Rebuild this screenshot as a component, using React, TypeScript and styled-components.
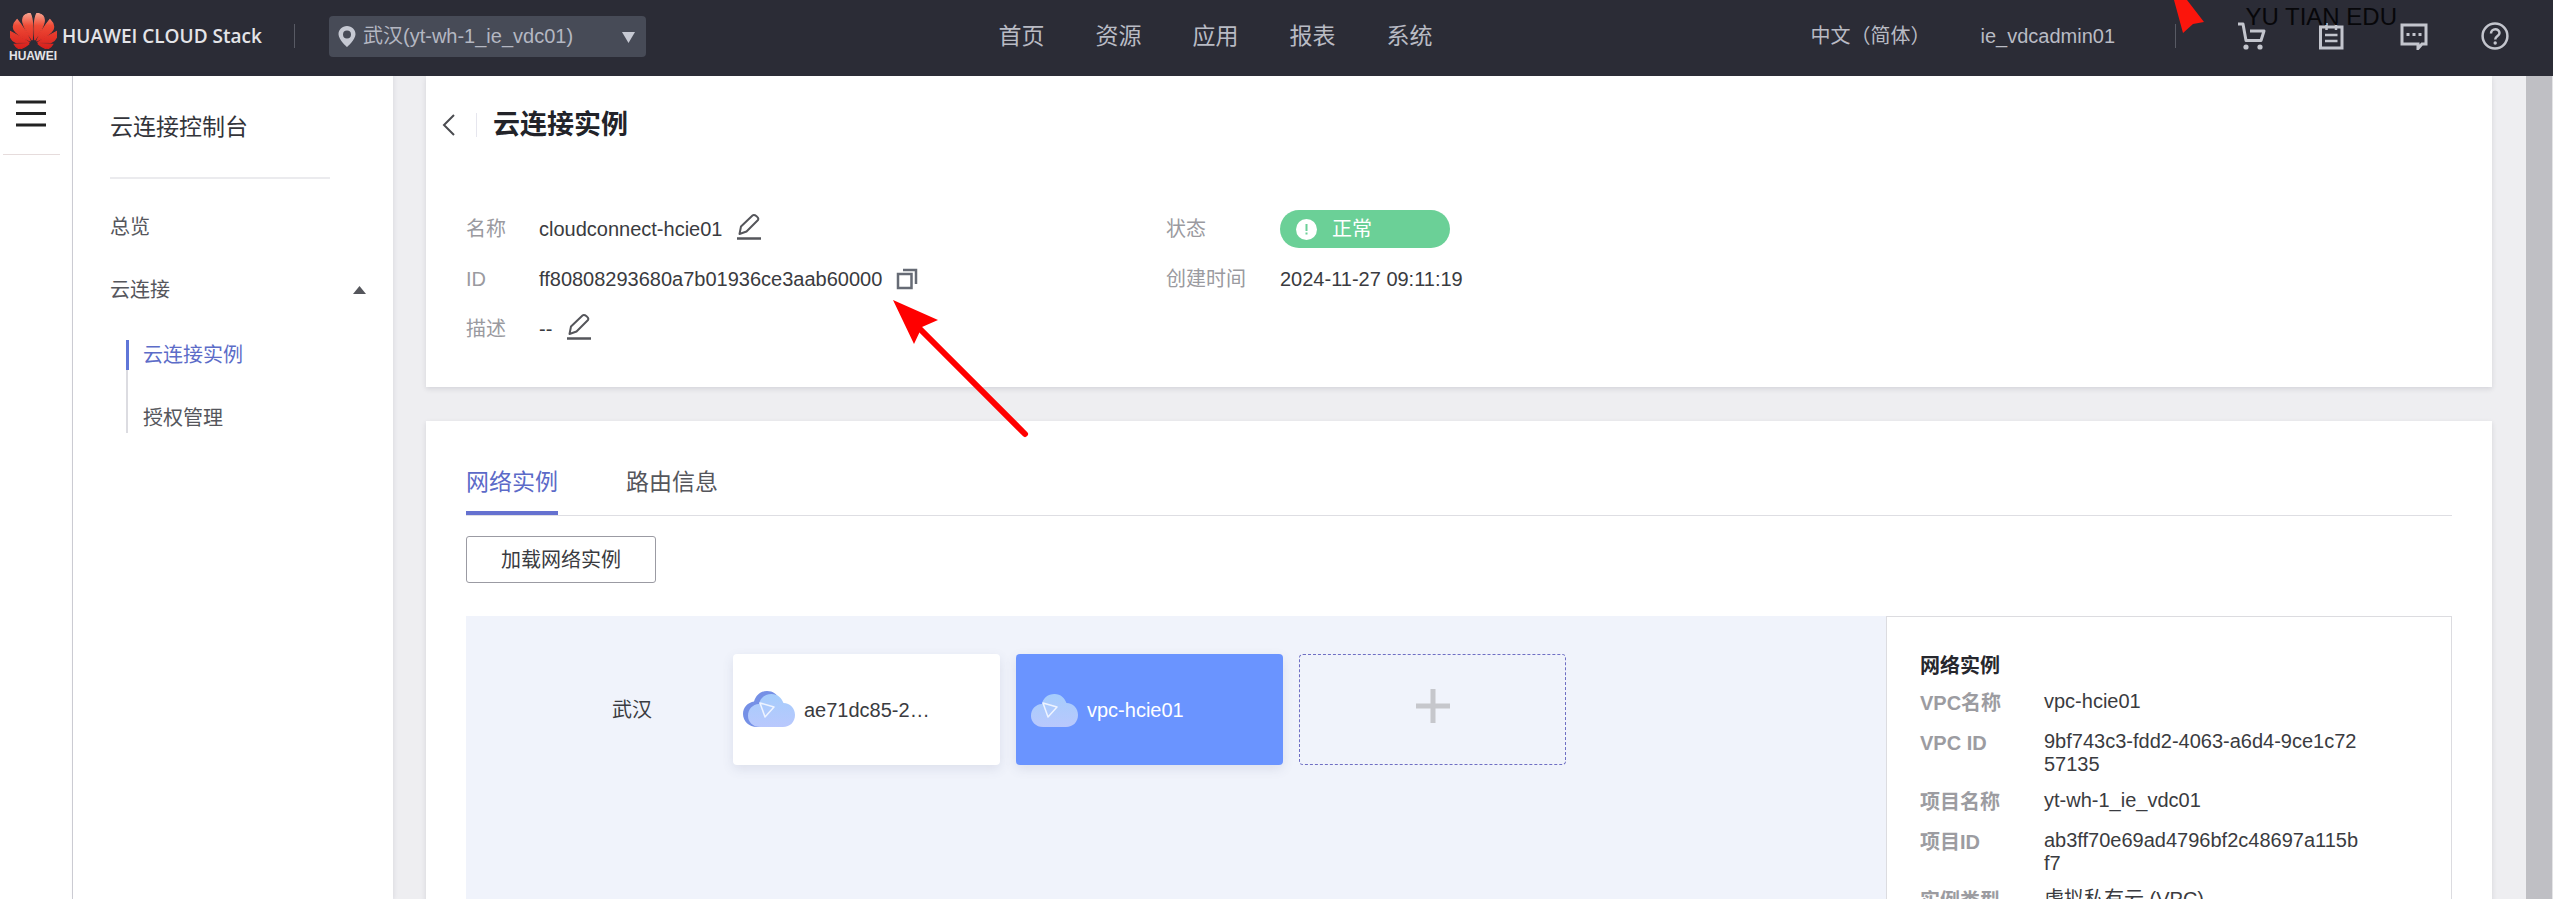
import React from 'react';
import styled, { createGlobalStyle } from 'styled-components';

const GlobalStyle = createGlobalStyle`
  *, *::before, *::after { box-sizing: border-box; }
  html, body { margin: 0; padding: 0; }
  body {
    font-family: "Liberation Sans", "Noto Sans CJK SC", sans-serif;
    font-size: 20px;
    line-height: 28px;
    color: #3a3b40;
    background: #eeeef1;
  }
  button, select { font: inherit; color: inherit; }
  button { padding: 0; border: 0; background: none; cursor: pointer; }
  a { color: inherit; text-decoration: none; }
  h1, h2, p, ul, dl, dd { margin: 0; padding: 0; }
  ul { list-style: none; }
  svg { display: block; flex: none; }
`;

const Shell = styled.div`
  position: relative;
  display: grid;
  grid-template-rows: auto minmax(0, 1fr);
  height: 100vh;
  overflow: hidden;
`;

/* ---------- top bar ---------- */

const TopBar = styled.header`
  display: flex;
  align-items: center;
  height: 76px;
  padding: 0 44px 4px 8px;
  background: #2b2c36;
  color: #b9bbc4;
`;

const TopLeft = styled.div`
  display: flex;
  align-items: center;
  flex: 0 0 calc(39% + 15px);
`;

const Brand = styled.a`
  display: flex;
  align-items: center;
  gap: 4px;
  width: 286px;
  color: #e4e4e8;
`;

const LogoMark = styled.span`
  display: flex;
  flex-direction: column;
  align-items: center;
  width: 50px;
  padding-top: 4px;
  font-size: 12px;
  line-height: 14px;
  font-weight: 700;
`;

const BrandName = styled.span`
  font-family: "Open Sans", "Noto Sans", sans-serif;
  font-size: 19px;
  font-weight: 600;
  white-space: nowrap;
`;

const BarDivider = styled.span`
  width: 1px;
  height: 24px;
  background: #585a64;
`;

const RegionField = styled.label`
  position: relative;
  display: flex;
  align-items: center;
  width: 317px;
  margin-left: 34px;
  color: #b4b7c2;
`;

const RegionSelect = styled.select`
  width: 100%;
  height: 41px;
  padding: 0 40px 0 34px;
  border: 0;
  border-radius: 4px;
  appearance: none;
  background: #474b57;
`;

const PinIcon = styled.svg`
  position: absolute;
  left: 9px;
  top: 10px;
  pointer-events: none;
`;

const CaretIcon = styled.svg`
  position: absolute;
  right: 11px;
  top: 16px;
  pointer-events: none;
`;

const MainNav = styled.nav`
  display: flex;
  gap: 51px;
  font-size: 23px;
  white-space: nowrap;
`;

const TopRight = styled.div`
  display: flex;
  align-items: center;
  margin-left: auto;
  white-space: nowrap;
`;

const UserLinks = styled.div`
  display: flex;
  gap: 50px;
  margin-right: 60px;
`;

const Tools = styled.div`
  display: flex;
  gap: 53px;
  margin-left: 62px;
`;

/* ---------- side areas ---------- */

const Body = styled.div`
  display: flex;
  min-height: 0;
`;

const Rail = styled.div`
  flex: 0 0 73px;
  padding: 0 12px 0 3px;
  border-right: 1px solid #cfcfd6;
  background: #fff;
`;

const MenuButton = styled.button`
  display: flex;
  width: 100%;
  height: 79px;
  padding: 24px 0 0 13px;
  border-bottom: 1px solid #e6dcdc;
`;

const SideNav = styled.nav`
  flex: 0 0 320px;
  padding: 21px 27px 0 37px;
  background: #fff;
  box-shadow: 1px 0 4px rgba(60, 60, 90, 0.1);
  color: #55565c;
`;

const SideTitle = styled.h2`
  width: 220px;
  height: 82px;
  margin-bottom: 16px;
  padding-top: 16px;
  border-bottom: 2px solid #ebebee;
  font-size: 23px;
  font-weight: 400;
  color: #33343a;
`;

const SideItem = styled.a`
  display: flex;
  align-items: center;
  justify-content: space-between;
  height: 63px;
`;

const SubList = styled.ul`
  display: grid;
  gap: 33px;
  margin: 19px 0 0 16px;
  border-left: 2px solid #dcdce1;
`;

const SubItem = styled.a<{ $active?: boolean }>`
  display: block;
  height: 30px;
  margin-left: -2px;
  padding-left: ${(p) => (p.$active ? 14 : 17)}px;
  border-left: ${(p) => (p.$active ? '3px solid #5f76d8' : '0')};
  line-height: 30px;
  color: ${(p) => (p.$active ? '#5c6cc8' : 'inherit')};
`;

const ScrollTrack = styled.div`
  flex: 0 0 27px;
  border-right: 1px solid #e4e4e6;
  background: #bfbfc4;
`;

/* ---------- main content ---------- */

const Main = styled.main`
  flex: 1;
  min-width: 0;
  padding: 0 34px 0 33px;
  overflow: hidden;
`;

const Card = styled.section`
  margin-bottom: 34px;
  padding: 0 40px;
  background: #fff;
  box-shadow: 0 2px 5px rgba(60, 60, 80, 0.14);
`;

const PageHead = styled.div`
  display: flex;
  align-items: center;
  height: 98px;
  margin-left: -24px;
`;

const BackButton = styled.button`
  padding-right: 20px;
  border-right: 1px solid #e6e6ee;
`;

const PageTitle = styled.h1`
  margin-left: 16px;
  font-size: 27px;
  font-weight: 700;
  color: #222329;
`;

const InfoGrid = styled.div`
  display: grid;
  grid-template-columns: minmax(0, 700px) minmax(0, 1fr);
  padding: 30px 0 33px;
`;

const InfoList = styled.dl<{ $label: number }>`
  display: grid;
  grid-template-columns: ${(p) => p.$label}px minmax(0, 1fr);
  grid-auto-rows: 50px;
  align-items: center;
  align-content: start;
  white-space: nowrap;

  dt { color: #9a9aa0; }
`;

const InfoValue = styled.dd`
  display: flex;
  align-items: center;
  gap: 14px;
`;

const Status = styled.span`
  display: flex;
  align-items: center;
  gap: 15px;
  width: 170px;
  height: 38px;
  padding-left: 16px;
  border-radius: 19px;
  background: #6bd097;
  color: #fff;
`;

const Tabs = styled.div`
  display: flex;
  gap: 68px;
  padding-top: 35px;
  border-bottom: 1px solid #dedee3;
  font-size: 23px;
`;

const Tab = styled.button<{ $active?: boolean }>`
  height: 59px;
  padding-bottom: 4px;
  border-bottom: 4px solid ${(p) => (p.$active ? '#6571d0' : 'transparent')};
  color: ${(p) => (p.$active ? '#5c6ac8' : '#55565c')};
`;

const LoadButton = styled.button`
  height: 47px;
  margin: 20px 0 33px;
  padding: 0 34px;
  border: 1px solid #9b9ba3;
  border-radius: 3px;
`;

const Topology = styled.div`
  display: flex;
`;

const RegionMap = styled.div`
  flex: 1;
  display: flex;
  align-items: flex-start;
  min-width: 0;
  min-height: 480px;
  padding-top: 38px;
  background: #f0f3fb;
`;

const RegionName = styled.span`
  width: 267px;
  padding-left: 146px;
  line-height: 112px;
`;

const Instances = styled.div`
  display: flex;
  gap: 16px;
`;

const Instance = styled.button<{ $selected?: boolean }>`
  display: flex;
  align-items: center;
  gap: 8px;
  width: 267px;
  height: 111px;
  padding-left: 10px;
  border-radius: 4px;
  background: ${(p) => (p.$selected ? '#6a94ff' : '#fff')};
  color: ${(p) => (p.$selected ? '#fff' : '#3a3b40')};
  box-shadow: 0 4px 12px rgba(70, 80, 120, 0.12);
`;

const AddInstance = styled.button`
  display: flex;
  align-items: center;
  justify-content: center;
  width: 267px;
  height: 111px;
  padding-bottom: 8px;
  border: 1px dashed #6f6fc4;
  border-radius: 4px;
`;

const Detail = styled.aside`
  flex: 0 0 566px;
  padding: 35px 33px;
  border: 1px solid #dcdce0;
  background: #fff;
`;

const DetailTitle = styled.h2`
  margin-bottom: 10px;
  font-size: 20px;
  font-weight: 700;
  color: #26272d;
`;

const DetailList = styled.dl`
  display: grid;
  grid-template-columns: 124px 316px;
  row-gap: 13px;

  dt { min-height: 27px; line-height: 27px; font-weight: 700; color: #9c9ca1; }
  dd { line-height: 23px; word-break: break-all; }
`;

const ArrowOverlay = styled.svg`
  position: absolute;
  left: 890px;
  top: 296px;
  pointer-events: none;
`;

const PointerOverlay = styled.svg`
  position: absolute;
  right: 348px;
  top: 0;
  pointer-events: none;
`;

const Watermark = styled.span`
  position: absolute;
  right: 156px;
  top: 3px;
  font-size: 24px;
  color: #07070a;
  white-space: nowrap;
  pointer-events: none;
`;

/* ---------- drawings ---------- */

const petals =
  'M3.67 6.14S1.82 7.91 1.72 9.78v.35c.08 1.51 1.22 2.4 1.22 2.4 1.83 1.79 6.26 4.04 7.3 4.55 0 0 .06.03.1-.01l.02-.04v-.04C7.52 10.8 3.67 6.14 3.67 6.14zM9.65 18.6c-.02-.08-.1-.08-.1-.08l-7.38.26c.8 1.43 2.15 2.53 3.56 2.2.96-.25 3.16-1.78 3.88-2.3.06-.05.04-.09.04-.09zm.08-.78C6.49 15.63.21 12.28.21 12.28c-.15.46-.2.9-.21 1.3v.07c0 1.07.4 1.82.4 1.82.8 1.69 2.34 2.2 2.34 2.2.7.3 1.4.31 1.4.31.12.02 4.4 0 5.54 0 .05 0 .08-.05.08-.05v-.06c0-.03-.03-.05-.03-.05zM9.06 3.19a3.42 3.42 0 00-2.57 3.15v.41c.03.6.16 1.05.16 1.05.66 2.9 3.86 7.65 4.55 8.65.05.05.1.03.1.03a.1.1 0 00.06-.1c1.06-10.6-1.11-13.42-1.11-13.42-.32.02-1.19.23-1.19.23z';

const Flower = () => (
  <svg width="47" height="36" viewBox="0 3 24 18" aria-hidden="true">
    <defs>
      <linearGradient id="petal" x1="0" y1="3" x2="0" y2="21" gradientUnits="userSpaceOnUse">
        <stop offset="0" stopColor="#f7a08c" />
        <stop offset="0.35" stopColor="#ee4a35" />
        <stop offset="1" stopColor="#d81f1c" />
      </linearGradient>
    </defs>
    <g fill="url(#petal)" stroke="url(#petal)" strokeWidth="0.600">
      <path d={petals} />
      <path d={petals} transform="matrix(-1 0 0 1 24 0)" />
    </g>
  </svg>
);

const toolStroke = { fill: 'none', stroke: '#c3c5cd', strokeWidth: 3 } as const;

const CartIcon = () => (
  <svg width="28" height="28" viewBox="0 0 28 28" {...toolStroke}>
    <path d="M0 2H5L8 18.500H23L26 9H12" strokeLinejoin="round" />
    <circle cx="8" cy="25" r="2.600" fill="#c3c5cd" stroke="none" />
    <circle cx="22" cy="25" r="2.600" fill="#c3c5cd" stroke="none" />
  </svg>
);

const ClipboardIcon = () => (
  <svg width="28" height="28" viewBox="0 0 28 28" {...toolStroke}>
    <path d="M1.500 5H23V26H1.500Z" />
    <path d="M7.500 1V8M17 1V8M6 13H18.500M6 19H18.500" strokeWidth="2.500" />
  </svg>
);

const ChatIcon = () => (
  <svg width="28" height="28" viewBox="0 0 28 28" {...toolStroke}>
    <path d="M2 3H26V22H22L18 26.500V22H2Z" />
    <path d="M6.500 12.500H9.500M12.500 12.500H15.500M18.500 12.500H21.500" />
  </svg>
);

const HelpIcon = () => (
  <svg width="28" height="28" viewBox="0 0 28 28" {...toolStroke} strokeWidth={2.5}>
    <circle cx="14" cy="14" r="12.400" />
    <path d="M10 11.500C10 6 18.500 6 18.500 11C18.500 14 14.200 14 14.200 17.500" />
    <circle cx="14.200" cy="21" r="1.700" fill="#c3c5cd" stroke="none" />
  </svg>
);

const PencilIcon = () => (
  <svg width="26" height="32" viewBox="0 0 26 32" fill="none" stroke="#55565b" strokeWidth="2">
    <path d="M1 25.500H25" strokeWidth="2.500" />
    <path d="M3.500 21L5 13.500L16.500 2.500C18.500 0.800 23.500 4.500 22 7L10.500 18.500Z" strokeLinejoin="round" />
  </svg>
);

const CopyIcon = () => (
  <svg width="22" height="22" viewBox="0 0 22 22" fill="none" stroke="#666b75" strokeWidth="2.500">
    <path d="M2 6H15.500V20H2Z" />
    <path d="M7 2H20V16" />
  </svg>
);

const cloud =
  'M17 38C10 38 5 33 5 27C5 20 9.500 15.500 16 15C17 9 22 5 28.500 5C35 5 38.500 9 40.500 14C47 14 52 19 52 26C52 33 47 38 40 38Z';

const CloudIcon = ({ shadow }: { shadow?: boolean }) => (
  <svg width="53" height="42" viewBox="0 0 53 42" aria-hidden="true">
    <defs>
      <linearGradient id="cloudFill" x1="0" y1="0" x2="0" y2="1">
        <stop offset="0" stopColor="#a5cdfc" />
        <stop offset="1" stopColor="#b9c8fd" />
      </linearGradient>
    </defs>
    {shadow && (
      <path
        d="M14 38C6 38 0 32 0 25C0 18 5 13.500 11 12.500C13 6 18 2 24 2C30 2 34 5 36 10L22 38Z"
        fill="#7590e6"
      />
    )}
    <path d={cloud} fill="url(#cloudFill)" />
    <path d="M17 14L31 18L22 28Z" fill="none" stroke="#eef4ff" strokeWidth="1.500" strokeLinejoin="round" />
  </svg>
);

const navItems = ['首页', '资源', '应用', '报表', '系统'];

const details: [string, string][] = [
  ['VPC名称', 'vpc-hcie01'],
  ['VPC ID', '9bf743c3-fdd2-4063-a6d4-9ce1c7257135'],
  ['项目名称', 'yt-wh-1_ie_vdc01'],
  ['项目ID', 'ab3ff70e69ad4796bf2c48697a115bf7'],
  ['实例类型', '虚拟私有云 (VPC)'],
];

export default function App() {
  return (
    <>
      <GlobalStyle />
      <Shell>
        <TopBar>
          <TopLeft>
            <Brand href="#home">
              <LogoMark>
                <Flower />
                HUAWEI
              </LogoMark>
              <BrandName>HUAWEI CLOUD Stack</BrandName>
            </Brand>
            <BarDivider />
            <RegionField>
              <RegionSelect aria-label="区域" defaultValue="wh">
                <option value="wh">武汉(yt-wh-1_ie_vdc01)</option>
              </RegionSelect>
              <PinIcon width="18" height="22" viewBox="0 0 18 22">
                <path
                  d="M9 0C4 0 0.500 3.700 0.500 8.200C0.500 13.500 9 21 9 21S17.500 13.500 17.500 8.200C17.500 3.700 14 0 9 0ZM9 4.500A4 4 0 1 1 9 12.500A4 4 0 1 1 9 4.500Z"
                  fill="#c6c9d3"
                  fillRule="evenodd"
                />
              </PinIcon>
              <CaretIcon width="13" height="11" viewBox="0 0 13 11">
                <path d="M0 0H13L6.500 11Z" fill="#c6c9d3" />
              </CaretIcon>
            </RegionField>
          </TopLeft>
          <MainNav>
            {navItems.map((item) => (
              <a key={item} href="#nav">{item}</a>
            ))}
          </MainNav>
          <TopRight>
            <UserLinks>
              <a href="#lang">中文（简体）</a>
              <a href="#user">ie_vdcadmin01</a>
            </UserLinks>
            <BarDivider />
            <Tools>
              <button aria-label="购物车"><CartIcon /></button>
              <button aria-label="订单"><ClipboardIcon /></button>
              <button aria-label="消息"><ChatIcon /></button>
              <button aria-label="帮助"><HelpIcon /></button>
            </Tools>
          </TopRight>
        </TopBar>

        <Body>
          <Rail>
            <MenuButton aria-label="菜单">
              <svg width="30" height="28" viewBox="0 0 30 28" stroke="#222" strokeWidth="3">
                <path d="M0 2H30M0 13.500H30M0 25H30" />
              </svg>
            </MenuButton>
          </Rail>

          <SideNav>
            <SideTitle>云连接控制台</SideTitle>
            <SideItem href="#overview">总览</SideItem>
            <SideItem href="#cc">
              云连接
              <svg width="13" height="8" viewBox="0 0 13 8">
                <path d="M0 8L6.500 0L13 8Z" fill="#55565c" />
              </svg>
            </SideItem>
            <SubList>
              <li><SubItem href="#instances" $active>云连接实例</SubItem></li>
              <li><SubItem href="#auth">授权管理</SubItem></li>
            </SubList>
          </SideNav>

          <Main>
            <Card>
              <PageHead>
                <BackButton aria-label="返回">
                  <svg width="14" height="24" viewBox="0 0 14 24" fill="none" stroke="#4a4b50" strokeWidth="2">
                    <path d="M12 2L2 12L12 22" />
                  </svg>
                </BackButton>
                <PageTitle>云连接实例</PageTitle>
              </PageHead>
              <InfoGrid>
                <InfoList $label={73}>
                  <dt>名称</dt>
                  <InfoValue>
                    cloudconnect-hcie01
                    <button aria-label="编辑名称"><PencilIcon /></button>
                  </InfoValue>
                  <dt>ID</dt>
                  <InfoValue>
                    ff80808293680a7b01936ce3aab60000
                    <button aria-label="复制"><CopyIcon /></button>
                  </InfoValue>
                  <dt>描述</dt>
                  <InfoValue>
                    --
                    <button aria-label="编辑描述"><PencilIcon /></button>
                  </InfoValue>
                </InfoList>
                <InfoList $label={114}>
                  <dt>状态</dt>
                  <InfoValue>
                    <Status>
                      <svg width="21" height="21" viewBox="0 0 21 21">
                        <circle cx="10.500" cy="10.500" r="10.500" fill="#fff" />
                        <path d="M10.500 5V12M10.500 13.500V15.500" stroke="#6bd097" strokeWidth="2" />
                      </svg>
                      正常
                    </Status>
                  </InfoValue>
                  <dt>创建时间</dt>
                  <InfoValue>2024-11-27 09:11:19</InfoValue>
                </InfoList>
              </InfoGrid>
            </Card>

            <Card>
              <Tabs role="tablist">
                <Tab role="tab" aria-selected="true" $active>网络实例</Tab>
                <Tab role="tab" aria-selected="false">路由信息</Tab>
              </Tabs>
              <LoadButton>加载网络实例</LoadButton>
              <Topology>
                <RegionMap>
                  <RegionName>武汉</RegionName>
                  <Instances>
                    <Instance>
                      <CloudIcon shadow />
                      ae71dc85-2…
                    </Instance>
                    <Instance $selected>
                      <CloudIcon />
                      vpc-hcie01
                    </Instance>
                    <AddInstance aria-label="添加">
                      <svg width="34" height="34" viewBox="0 0 34 34" stroke="#c6c7cc" strokeWidth="5">
                        <path d="M0 17H34M17 0V34" />
                      </svg>
                    </AddInstance>
                  </Instances>
                </RegionMap>
                <Detail>
                  <DetailTitle>网络实例</DetailTitle>
                  <DetailList>
                    {details.map(([label, value]) => (
                      <React.Fragment key={label}>
                        <dt>{label}</dt>
                        <dd>{value}</dd>
                      </React.Fragment>
                    ))}
                  </DetailList>
                </Detail>
              </Topology>
            </Card>
          </Main>

          <ScrollTrack />
        </Body>

        <ArrowOverlay width="142" height="144" viewBox="0 0 142 144">
          <path d="M30 33L135 138" stroke="#f00" strokeWidth="6" strokeLinecap="round" />
          <path d="M3 4L48 24L32 31L24 48Z" fill="#f00" />
        </ArrowOverlay>
        <PointerOverlay width="32" height="34" viewBox="0 0 32 34">
          <path d="M1 0H14L31 22L20 24L10 33Z" fill="#fb150c" />
        </PointerOverlay>
        <Watermark>YU TIAN EDU</Watermark>
      </Shell>
    </>
  );
}
